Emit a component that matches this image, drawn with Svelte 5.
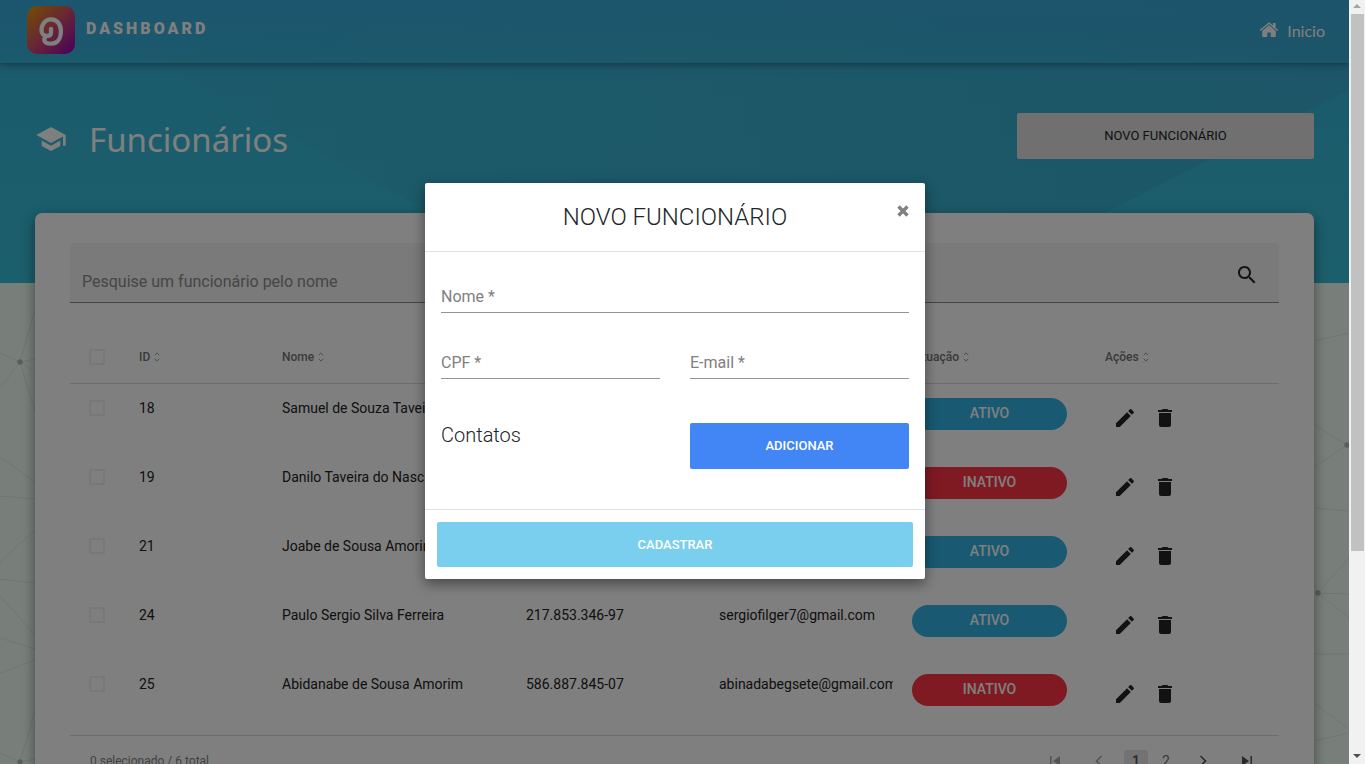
<script>
  const employees = [
    { id: 18, name: 'Samuel de Souza Taveira', cpf: '041.562.873-10', email: 'samueltaveira@gmail.com', active: true },
    { id: 19, name: 'Danilo Taveira do Nascimento', cpf: '052.741.963-25', email: 'danilotaveira@gmail.com', active: false },
    { id: 21, name: 'Joabe de Sousa Amorim', cpf: '063.852.147-31', email: 'joabeamorim@gmail.com', active: true },
    { id: 24, name: 'Paulo Sergio Silva Ferreira', cpf: '217.853.346-97', email: 'sergiofilger7@gmail.com', active: true },
    { id: 25, name: 'Abidanabe de Sousa Amorim', cpf: '586.887.845-07', email: 'abinadabegsete@gmail.com', active: false }
  ];
  const columns = ['ID', 'Nome', 'CPF', 'E-mail', 'Situação', 'Ações'];

  const leftLines = [
    [20, 79, 0, 70], [20, 79, 35, 27], [20, 79, 35, 76], [20, 79, 35, 89], [20, 79, 0, 105], [20, 79, 35, 128],
    [0, 174, 35, 199], [0, 213, 35, 216], [0, 279, 35, 247],
    [0, 296, 35, 300], [0, 313, 35, 352], [0, 355, 35, 366], [0, 390, 35, 377],
    [20, 479, 35, 428], [20, 479, 0, 470], [20, 479, 35, 476]
  ];
  const rightLines = [
    [0, 58, 36, 50], [0, 141, 34, 162], [0, 185, 34, 162], [0, 225, 36, 228],
    [5, 310, 36, 275], [5, 310, 36, 311], [5, 310, 36, 335], [5, 310, 0, 300],
    [0, 371, 36, 371], [0, 419, 36, 446], [0, 458, 36, 450]
  ];
</script>

<div class="window">
  <div class="viewport">
    <div class="page">
      <svg class="mesh left" width="36" height="481" aria-hidden="true">
        {#each leftLines as [x1, y1, x2, y2]}<line {x1} {y1} {x2} {y2} />{/each}
        <circle cx="20" cy="79" r="2.7" /><circle cx="20" cy="479" r="2.7" />
      </svg>
      <svg class="mesh right" width="36" height="481" aria-hidden="true">
        {#each rightLines as [x1, y1, x2, y2]}<line {x1} {y1} {x2} {y2} />{/each}
        <circle cx="34" cy="162" r="2.7" /><circle cx="5" cy="310" r="2.7" />
      </svg>

      <div class="banner">
        <svg class="facets" viewBox="0 0 1349 283" preserveAspectRatio="none" aria-hidden="true">
          <defs>
            <linearGradient id="sky" x1="0" y1="0" x2="0" y2="1">
              <stop offset="0" stop-color="#36b0dc" /><stop offset=".3" stop-color="#37b8d8" /><stop offset="1" stop-color="#38bed8" />
            </linearGradient>
            <linearGradient id="facet" x1="0" y1="0" x2="1" y2="0">
              <stop offset="0" stop-color="#38b2d4" stop-opacity=".3" /><stop offset=".5" stop-color="#3ab0d0" stop-opacity=".8" /><stop offset="1" stop-color="#3aaace" stop-opacity=".8" />
            </linearGradient>
            <linearGradient id="glow" x1="0" y1="0" x2="0" y2="1">
              <stop offset="0" stop-color="#38a6e2" stop-opacity=".5" /><stop offset=".3" stop-color="#38a8e0" stop-opacity="0" />
            </linearGradient>
          </defs>
          <rect width="1349" height="283" fill="url(#sky)" />
          <path d="M40 0H1349V90L965 283H560Z" fill="url(#facet)" />
          <rect width="1349" height="283" fill="url(#glow)" />
        </svg>
        <header>
          <a class="brand" href="#top">
            <svg width="48" height="48" viewBox="0 0 48 48" aria-hidden="true">
              <defs>
                <linearGradient id="logo" x1="0" y1="0" x2="1" y2="1">
                  <stop offset="0" stop-color="#e89a00" /><stop offset=".5" stop-color="#d04c6c" /><stop offset="1" stop-color="#9000b8" />
                </linearGradient>
              </defs>
              <rect width="48" height="48" rx="10" fill="url(#logo)" />
              <path d="M24 22.800v3.700c0 2.100-1.500 3.400-4 3.400-3.500 0-5.500-2.500-5.500-5.700 0-5.900 3.700-10.900 9.500-10.900 6.100 0 9.900 5 9.900 12 0 8.300-4.300 12.400-9.600 12.400-4 0-7-1.300-7-4 0-1 .3-1.800.8-2.500" fill="none" stroke="#fff" stroke-width="4.300" stroke-linecap="round" stroke-linejoin="round" />
            </svg>
            <span>DASHBOARD</span>
          </a>
          <a class="home" href="#inicio">
            <svg width="20" height="18" viewBox="0 0 20 18" aria-hidden="true" fill="#fff">
              <path d="M10 4.200 3.200 9.900V15.300c0 .4.3.7.7.7H8.300V11.400h3.400V16h4.400c.4 0 .7-.3.700-.7V9.900Z" />
              <path d="M.7 8.900 9.100 1.900c.5-.4 1.300-.4 1.800 0L14 4.500V2h2.600v4.700l2.700 2.200-.9 1.100L10 3.100 1.600 10Z" />
            </svg>
            <span>Inicio</span>
          </a>
        </header>
      </div>

      <main>
        <div class="heading">
          <svg width="32" height="32" viewBox="0 0 24 24" fill="#fff" aria-hidden="true">
            <path d="M5 13.180v4L12 21l7-3.820v-4L12 17l-7-3.820zM12 3 1 9l11 6 9-4.910V17h2V9L12 3z" />
          </svg>
          <h1>Funcionários</h1>
          <button class="new" type="button">NOVO FUNCIONÁRIO</button>
        </div>

        <section class="card">
          <div class="search">
            <input type="search" placeholder="Pesquise um funcionário pelo nome" aria-label="Pesquise um funcionário pelo nome" />
            <button class="icon" type="button" aria-label="Pesquisar">
              <svg width="24" height="24" viewBox="0 0 24 24"><path d="M15.500 14h-.79l-.28-.27C15.410 12.590 16 11.110 16 9.500 16 5.910 13.090 3 9.500 3S3 5.910 3 9.500 5.910 16 9.500 16c1.610 0 3.090-.59 4.230-1.570l.27.28v.79l5 4.990L20.490 19l-4.990-5zm-6 0C7.010 14 5 11.990 5 9.500S7.010 5 9.500 5 14 7.010 14 9.500 11.990 14 9.500 14z" /></svg>
            </button>
          </div>

          <table>
            <colgroup><col class="c-check" /><col class="c-id" /><col class="c-name" /><col /><col /><col /><col /></colgroup>
            <thead>
              <tr>
                <th><input type="checkbox" aria-label="Selecionar todos" /></th>
                {#each columns as column}
                  <th scope="col">{column}<svg class="sort" width="6" height="10" viewBox="0 0 6 10" aria-hidden="true"><path d="M.7 3.200 3 .9 5.300 3.200M.7 6.800 3 9.100 5.300 6.800" /></svg></th>
                {/each}
              </tr>
            </thead>
            <tbody>
              {#each employees as person}
                <tr>
                  <td class="check"><input type="checkbox" aria-label={`Selecionar ${person.name}`} /></td>
                  <td>{person.id}</td>
                  <td>{person.name}</td>
                  <td>{person.cpf}</td>
                  <td>{person.email}</td>
                  <td><span class="pill" class:off={!person.active}>{person.active ? 'ATIVO' : 'INATIVO'}</span></td>
                  <td>
                    <div class="actions">
                      <button class="icon" type="button" aria-label="Editar">
                        <svg width="24" height="24" viewBox="0 0 24 24"><path d="M3 17.250V21h3.750L17.810 9.940l-3.750-3.750L3 17.250zM20.710 7.040c.39-.39.39-1.020 0-1.410l-2.340-2.340c-.39-.39-1.020-.39-1.410 0l-1.830 1.830 3.750 3.750 1.830-1.830z" /></svg>
                      </button>
                      <button class="icon" type="button" aria-label="Excluir">
                        <svg width="24" height="24" viewBox="0 0 24 24"><path d="M6 19c0 1.100.9 2 2 2h8c1.100 0 2-.9 2-2V7H6v12zM19 4h-3.500l-1-1h-5l-1 1H5v2h14V4z" /></svg>
                      </button>
                    </div>
                  </td>
                </tr>
              {/each}
            </tbody>
          </table>

          <footer>
            <span>0 selecionado / 6 total</span>
            <nav aria-label="Paginação">
              <button class="dim" type="button" aria-label="Primeira"><svg width="12" height="12" viewBox="0 0 12 12"><path d="M1 1h1.500v10H1zM11 1v10L4 6z" /></svg></button>
              <button class="dim" type="button" aria-label="Anterior"><svg width="12" height="12" viewBox="0 0 12 12"><path class="line" d="M8.500 1 3.500 6l5 5" /></svg></button>
              <button class="num current" type="button">1</button>
              <button class="num" type="button">2</button>
              <button type="button" aria-label="Próxima"><svg width="12" height="12" viewBox="0 0 12 12"><path class="line" d="M3.500 1l5 5-5 5" /></svg></button>
              <button type="button" aria-label="Última"><svg width="12" height="12" viewBox="0 0 12 12"><path d="M9.500 1H11v10H9.500zM1 1v10l7-5z" /></svg></button>
            </nav>
          </footer>
        </section>
      </main>
    </div>

    <div class="overlay">
      <form class="modal" role="dialog" aria-labelledby="modal-title" onsubmit={(e) => e.preventDefault()}>
        <div class="modal-head">
          <h2 id="modal-title">NOVO FUNCIONÁRIO</h2>
          <button class="close" type="button" aria-label="Fechar">
            <svg width="12" height="12" viewBox="0 0 12 12"><path d="M1.500 1.500l9 9M10.500 1.500l-9 9" /></svg>
          </button>
        </div>
        <div class="modal-body">
          <div class="field wide"><label for="nome">Nome *</label><input id="nome" type="text" /></div>
          <div class="field"><label for="cpf">CPF *</label><input id="cpf" type="text" /></div>
          <div class="field"><label for="email">E-mail *</label><input id="email" type="email" /></div>
          <h3>Contatos</h3>
          <button class="solid add" type="button">ADICIONAR</button>
        </div>
        <div class="modal-foot">
          <button class="solid submit" type="submit">CADASTRAR</button>
        </div>
      </form>
    </div>
  </div>

  <div class="scrollbar" aria-hidden="true">
    <svg width="16" height="14" viewBox="0 0 16 14"><path d="M4 8h8L8 4Z" fill="#a3a3a3" /></svg>
    <div class="track"><div class="thumb"></div></div>
    <svg width="16" height="14" viewBox="0 0 16 14"><path d="M4 4h8L8 8Z" fill="#505050" /></svg>
  </div>
</div>

<style>
  :global(body) {
    margin: 0;
  }

  .window {
    display: flex;
    height: 100vh;
    overflow: hidden;
    font-family: Roboto, "Liberation Sans", sans-serif;
    color: #212529;
  }

  .window * {
    box-sizing: border-box;
  }

  button,
  input {
    font-family: inherit;
    margin: 0;
  }

  button {
    border: 0;
    padding: 0;
    cursor: pointer;
  }

  .viewport {
    position: relative;
    flex: 1;
    min-width: 0;
    overflow: hidden;
  }

  .page {
    display: grid;
    background: #f0fff5;
  }

  .banner,
  main {
    grid-area: 1 / 1;
  }

  .banner {
    position: relative;
    height: 283px;
  }

  .facets {
    position: absolute;
    inset: 0;
    width: 100%;
    height: 100%;
  }

  .mesh {
    position: absolute;
    top: 283px;
    stroke: #e4e6f2;
    stroke-width: 1;
  }

  .mesh circle {
    fill: #b4bab8;
    stroke: none;
  }

  .mesh.left {
    left: 0;
  }

  .mesh.right {
    right: 0;
  }

  header {
    position: relative;
    display: flex;
    align-items: center;
    justify-content: space-between;
    height: 63px;
    padding: 0 24px 3px 27px;
    box-shadow: 0 2px 5px rgba(0, 0, 0, 0.2), 0 2px 10px rgba(0, 0, 0, 0.16);
  }

  header a {
    display: flex;
    align-items: center;
    color: #fff;
    text-decoration: none;
  }

  .brand {
    gap: 11px;
    font-size: 16px;
    font-weight: 900;
    line-height: 24px;
    letter-spacing: 3px;
  }

  .brand span {
    padding-bottom: 2px;
  }

  .home {
    gap: 8px;
    font-family: Lato, sans-serif;
    font-size: 16px;
  }

  main {
    position: relative;
    padding: 113px 35px 0;
  }

  .heading {
    display: flex;
    align-items: center;
    height: 46px;
    margin-bottom: 54px;
  }

  .heading > svg {
    margin-top: 6px;
  }

  h1 {
    flex: 1;
    margin: 0 0 0 22px;
    padding-top: 8px;
    font-family: "Noto Sans", sans-serif;
    font-size: 33px;
    font-weight: 400;
    line-height: 40px;
    color: #fff;
  }

  .new {
    width: 297px;
    height: 46px;
    padding-bottom: 2px;
    border-radius: 2px;
    background: #e0e0e0;
    font-size: 13px;
    color: #212529;
  }

  .card {
    padding: 30px 35px;
    border-radius: 7px;
    background: #fff;
    box-shadow: 0 5px 11px rgba(0, 0, 0, 0.25), 0 4px 15px rgba(0, 0, 0, 0.22);
  }

  .search {
    display: flex;
    align-items: center;
    height: 60px;
    padding: 0 12px;
    border-bottom: 1px solid #8b8b8b;
    border-radius: 4px 4px 0 0;
    background: #f5f5f5;
  }

  .search input {
    flex: 1;
    min-width: 0;
    padding: 18px 0 0;
    border: 0;
    outline: 0;
    background: none;
    font-size: 16px;
    line-height: 24px;
  }

  .search input::placeholder {
    color: #8c8c8c;
  }

  .search .icon {
    padding-top: 4px;
  }

  .icon {
    display: grid;
    place-items: center;
    width: 40px;
    height: 40px;
    background: none;
    fill: #252525;
  }

  table {
    width: 100%;
    margin-top: 28px;
    border-collapse: separate;
    border-spacing: 0;
    border-bottom: 1px solid #dadada;
    padding-bottom: 6px;
    table-layout: fixed;
  }

  .c-check {
    width: 50px;
  }

  .c-id {
    width: 143px;
  }

  .c-name {
    width: 244px;
  }

  th {
    height: 53px;
    padding: 0 19px;
    border-bottom: 1px solid #dadada;
    font-size: 12px;
    font-weight: 500;
    text-align: left;
    color: #757575;
  }

  .sort {
    margin-left: 4px;
    vertical-align: -1px;
    fill: none;
    stroke: #999;
  }

  td {
    height: 69px;
    padding: 14px 19px 0;
    overflow: hidden;
    font-size: 14px;
    line-height: 20px;
    vertical-align: top;
    white-space: nowrap;
    color: #222;
  }

  input[type='checkbox'] {
    appearance: none;
    display: block;
    width: 16px;
    height: 16px;
    border: 2px solid #f0f0f0;
  }

  td.check {
    padding-top: 16px;
  }

  .pill {
    display: block;
    height: 32px;
    border-radius: 16px;
    background: #33b5e5;
    font-weight: 500;
    line-height: 30px;
    text-align: center;
    color: #fff;
  }

  .pill.off {
    background: #ff3547;
  }

  .actions {
    display: flex;
  }

  footer {
    display: flex;
    align-items: center;
    justify-content: space-between;
    height: 50px;
    padding: 0 13px 0 20px;
    font-size: 12px;
    color: #858585;
  }

  nav {
    display: flex;
    align-items: center;
    gap: 6px;
  }

  nav button {
    display: grid;
    place-items: center;
    width: 38px;
    height: 22px;
    border-radius: 3px;
    background: none;
    font-size: 14px;
    fill: #555;
    stroke: none;
    color: #757575;
  }

  nav .num {
    width: 24px;
  }

  nav .current {
    background: #e6e6e6;
    font-weight: 500;
    color: #555;
  }

  nav .line {
    fill: none;
    stroke: #555;
    stroke-width: 1.6;
  }

  nav .dim {
    opacity: 0.5;
  }

  .overlay {
    position: absolute;
    inset: 0;
    display: grid;
    place-items: center;
    padding: 0 0 2px 1px;
    background: rgba(0, 0, 0, 0.5);
  }

  .modal {
    width: 500px;
    max-width: 100%;
    border-radius: 2px;
    background: #fff;
    box-shadow: 0 5px 11px rgba(0, 0, 0, 0.25), 0 4px 15px rgba(0, 0, 0, 0.22);
  }

  .modal-head {
    display: grid;
    grid-template-columns: 1fr auto 1fr;
    padding: 16px;
    border-bottom: 1px solid #dee2e6;
  }

  h2 {
    grid-column: 2;
    margin: 0;
    font-size: 24px;
    font-weight: 300;
    line-height: 36px;
  }

  .close {
    display: grid;
    place-items: center;
    justify-self: end;
    align-self: start;
    width: 12px;
    height: 24px;
    background: none;
    stroke: #808080;
    stroke-width: 3.4;
  }

  .modal-body {
    display: grid;
    grid-template-columns: 1fr 1fr;
    gap: 34px 30px;
    padding: 29px 16px 40px;
  }

  .field {
    display: grid;
  }

  .field label,
  .field input {
    grid-area: 1 / 1;
  }

  .field label {
    font-size: 16px;
    line-height: 32px;
    color: #808080;
  }

  .field input {
    width: 100%;
    height: 32px;
    padding: 0;
    border: 0;
    border-bottom: 1px solid #949494;
    outline: 0;
    background: none;
    font-size: 16px;
  }

  .wide {
    grid-column: 1 / -1;
  }

  h3 {
    margin: 10px 0 0;
    font-size: 20px;
    font-weight: 300;
    line-height: 24px;
  }

  .solid {
    border-radius: 2px;
    font-size: 13px;
    font-weight: 500;
    color: #fff;
  }

  .add {
    height: 46px;
    margin-top: 10px;
    padding-bottom: 2px;
    background: #4285f4;
  }

  .modal-foot {
    padding: 12px;
    border-top: 1px solid #dee2e6;
  }

  .submit {
    display: block;
    width: 100%;
    height: 45px;
    background: #7acfee;
  }

  .scrollbar {
    display: flex;
    flex-direction: column;
    width: 16px;
    background: #f1f1f1;
  }

  .track {
    flex: 1;
    padding: 0 1px 0 2px;
  }

  .thumb {
    height: 73%;
    background: #c1c1c1;
  }
</style>
